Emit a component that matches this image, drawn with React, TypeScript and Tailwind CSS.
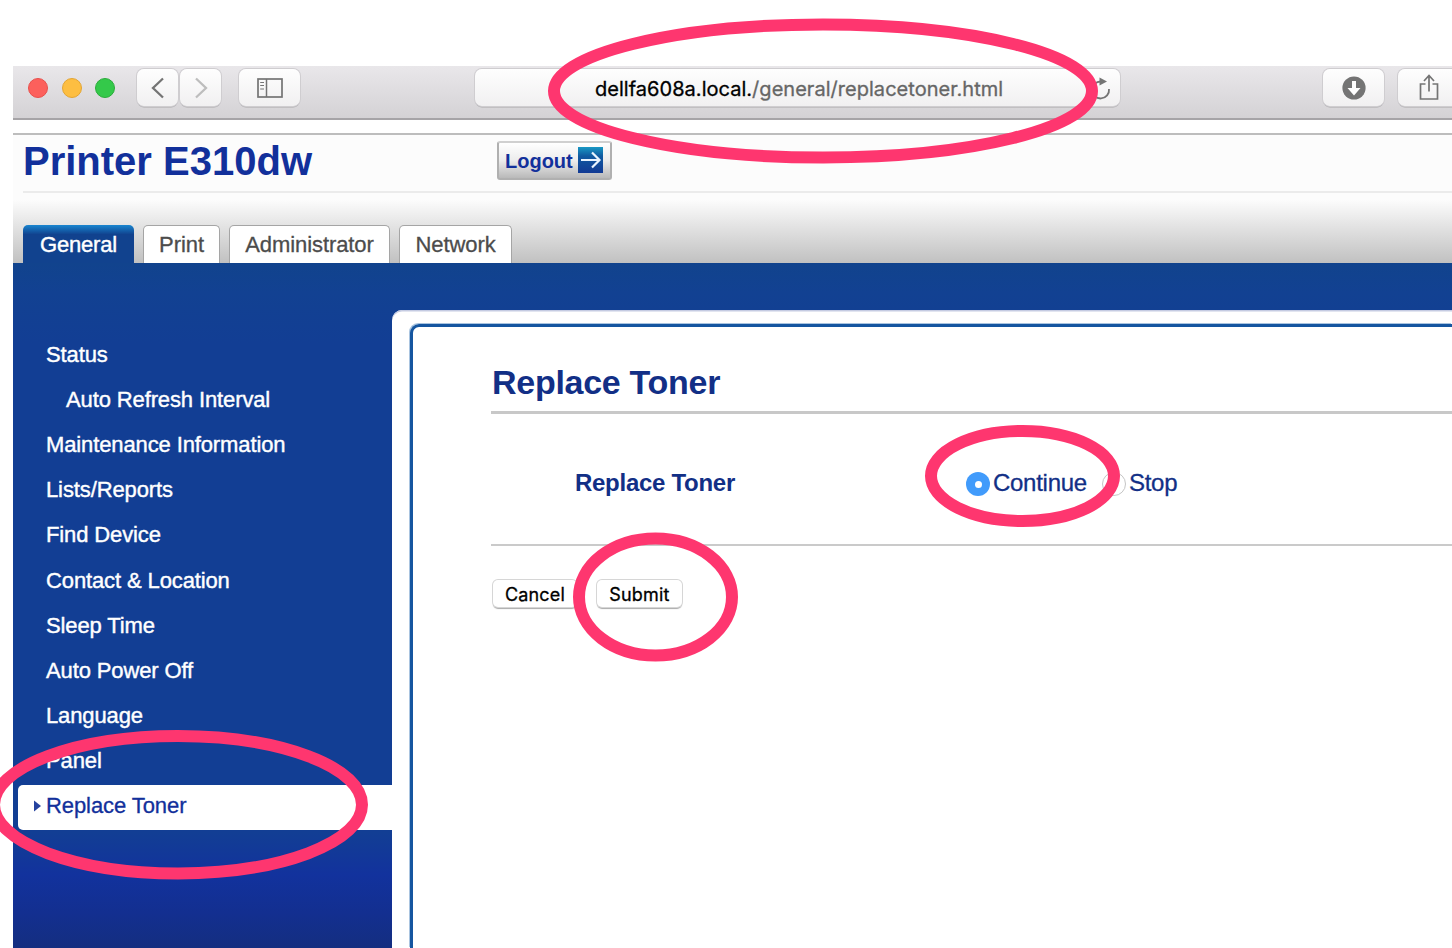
import type { ReactNode } from "react";

const menu = [
  { label: "Status" },
  { label: "Auto Refresh Interval", sub: true },
  { label: "Maintenance Information" },
  { label: "Lists/Reports" },
  { label: "Find Device" },
  { label: "Contact & Location" },
  { label: "Sleep Time" },
  { label: "Auto Power Off" },
  { label: "Language" },
  { label: "Panel" },
];

function ChromeButton({ className, children }: { className: string; children: ReactNode }) {
  return (
    <button
      className={`flex h-[37px] shrink-0 items-center justify-center rounded-[7px] bg-linear-to-b from-[#fefefe] to-[#f1f0f1] shadow-[0_0_0_1px_#cfcdd0,0_1.5px_0_0_#a9a7aa] ${className}`}
    >
      {children}
    </button>
  );
}

function Toolbar() {
  return (
    <div className="flex h-[54px] shrink-0 border-b-2 border-[#a6a4a7] bg-linear-to-b from-[#e9e7ea] to-[#d4d2d5] pt-[3px]">
      <div className="mt-[9px] ml-[15px] flex h-5 gap-[13.5px]">
        <span className="size-5 rounded-full border border-[#e8504c] bg-[#fc605c]" />
        <span className="size-5 rounded-full border border-[#e3a533] bg-[#fdbe41]" />
        <span className="size-5 rounded-full border border-[#2aac3a] bg-[#34c94a]" />
      </div>
      <ChromeButton className="ml-[22px] w-[41px]">
        <svg width="14" height="22" viewBox="0 0 14 22" fill="none" stroke="#747474" strokeWidth="2.3">
          <path d="M12 1.5 2 11 12 20.5" />
        </svg>
      </ChromeButton>
      <ChromeButton className="ml-[2px] w-[41px]">
        <svg width="14" height="22" viewBox="0 0 14 22" fill="none" stroke="#bdbdbd" strokeWidth="2.3">
          <path d="M2 1.5 12 11 2 20.5" />
        </svg>
      </ChromeButton>
      <ChromeButton className="ml-[18px] w-[61px]">
        <svg width="26" height="20" viewBox="0 0 26 20" fill="none" stroke="#747474">
          <rect x="1" y="1" width="24" height="18" strokeWidth="1.7" />
          <path d="M9.5 1v18" strokeWidth="1.5" />
          <path d="M3.2 4.5h3.8M3.2 7.5h3.8M3.2 11h3.8" strokeWidth="1.2" />
        </svg>
      </ChromeButton>
      <div className="ml-[175px] flex h-[37px] w-[645px] shrink-0 items-center rounded-[7px] bg-linear-to-b from-[#fefefe] to-[#f1f0f1] pl-[120px] shadow-[0_0_0_1px_#cfcdd0,0_1.5px_0_0_#a9a7aa]">
        <span className="w-[420px] pt-[2px] font-[Inter,sans-serif] text-[20px] tracking-[0.030px] whitespace-nowrap text-[#666] [-webkit-text-stroke:0.300px_#666]">
          <span className="text-black [-webkit-text-stroke:0.300px_black]">dellfa608a.local.</span>/general/replacetoner.html
        </span>
        <svg className="ml-[70px]" width="26" height="28" viewBox="0 0 26 28" fill="none" stroke="#747474" strokeWidth="1.8">
          <path d="M16 7.500A8.500 8.500 0 1 0 24 15" />
          <path d="M14.500 3.500 22 7.500l-7.500 4z" fill="#747474" stroke="none" />
        </svg>
      </div>
      <ChromeButton className="ml-[203px] w-[61px]">
        <svg width="24" height="24" viewBox="0 0 24 24">
          <circle cx="12" cy="12" r="11.600" fill="#747474" />
          <path d="M10 5h4v7h4.500L12 19.500 5.500 12H10z" fill="#fff" />
        </svg>
      </ChromeButton>
      <ChromeButton className="ml-[14px] w-[61px]">
        <svg className="mb-[2px]" width="20" height="26" viewBox="0 0 20 26" fill="none" stroke="#747474" strokeWidth="1.7">
          <path d="M6.500 10H1.500v15h17V10H13.500" />
          <path d="M10 17.500V1.500M5 7l5-5.500L15 7" />
        </svg>
      </ChromeButton>
    </div>
  );
}

function Tab({ className, children }: { className: string; children: ReactNode }) {
  return (
    <button
      className={`h-[38px] shrink-0 rounded-t-[5px] border-[1.500px] border-b-0 border-[#a5a5a5] bg-white pb-px text-[22px] tracking-[-0.080px] text-[#4c4c4c] [-webkit-text-stroke:0.300px_#4c4c4c] ${className}`}
    >
      {children}
    </button>
  );
}

function Header() {
  return (
    <header className="flex h-[130px] shrink-0 flex-col border-t-2 border-[#bdbdbd] bg-[#fcfcfc]">
      <div className="ml-[10px] flex h-[58px] shrink-0 border-b-2 border-[#ebebeb]">
        <h1 className="mt-[3px] w-[474px] text-[40px] leading-[46px] font-bold whitespace-nowrap text-[#12309b]">
          Printer E310dw
        </h1>
        <button className="mt-[6px] flex h-[39px] w-[115px] items-center rounded-[3px] border-2 border-[#b0b0b0] border-t-[#d0d0d0] bg-linear-to-b from-white via-[#ececec] to-[#b9b9b9] pl-[6px] text-[20px] font-bold text-[#12309b]">
          <span className="w-[73px] text-left">Logout</span>
          <svg className="mb-[2px]" width="25" height="26" viewBox="0 0 25 26">
            <defs>
              <linearGradient id="logout" x2="0" y2="1">
                <stop stopColor="#1998c4" />
                <stop offset=".35" stopColor="#0f5aa0" />
                <stop offset="1" stopColor="#123a94" />
              </linearGradient>
            </defs>
            <rect width="25" height="26" fill="url(#logout)" />
            <path d="M3 13h18M14 5.500 21.500 13 14 20.500" fill="none" stroke="#e8f4ff" strokeWidth="2.200" />
          </svg>
        </button>
      </div>
      <nav className="flex flex-1 items-end bg-linear-to-b from-[#fcfcfc] from-10% to-[#c1c1c1] pl-[10px]">
        <button className="h-[38px] w-[111px] shrink-0 rounded-t-[5px] bg-linear-to-b from-[#1a86d0] to-[#11428e] to-25% text-[22px] tracking-[-0.200px] text-white [-webkit-text-stroke:0.400px_white]">
          General
        </button>
        <Tab className="ml-[9px] w-[77px]">Print</Tab>
        <Tab className="ml-[9px] w-[161px]">Administrator</Tab>
        <Tab className="ml-[9px] w-[113px]">Network</Tab>
      </nav>
    </header>
  );
}

function Sidebar() {
  return (
    <aside className="flex w-[379px] shrink-0 flex-col pt-[70px]">
      {menu.map((item) => (
        <a
          key={item.label}
          className={`flex h-[45.200px] shrink-0 items-center pb-[3px] text-[22px] tracking-[-0.120px] text-white [-webkit-text-stroke:0.400px_white] ${item.sub ? "pl-[53px]" : "pl-[33px]"}`}
        >
          {item.label}
        </a>
      ))}
      <a className="ml-[5px] flex h-[45px] shrink-0 items-center rounded-l-[5px] bg-white pb-[3px] pl-[15px] text-[22px] tracking-[-0.080px] text-[#12309b] [-webkit-text-stroke:0.300px_#12309b]">
        <svg className="mr-[5px]" width="8" height="12" viewBox="0 0 8 12">
          <path d="M1 .5 8 6l-7 5.500z" fill="#26439f" />
        </svg>
        Replace Toner
      </a>
    </aside>
  );
}

function FormButton({ className, children }: { className: string; children: ReactNode }) {
  return (
    <button
      className={`h-[27px] rounded-[5px] bg-white font-[Inter,sans-serif] text-[18px] leading-[27px] tracking-[0.200px] text-black shadow-[0_0_0_1px_#d6d6d6,0_1.500px_1px_0_#aaa] [-webkit-text-stroke:0.300px_black] ${className}`}
    >
      <span className="block pt-px">{children}</span>
    </button>
  );
}

function Content() {
  return (
    <main className="mt-[47px] flex flex-1 rounded-tl-[10px] bg-white pt-[14px] pl-[18px] shadow-[inset_0_1.500px_0_#c5cbe2]">
      <div className="flex-1 rounded-tl-[9px] border-t-[3px] border-l-[3px] border-[#1556a0] pl-[78px] text-[#122f86] shadow-[-1px_-1px_0_#a9c4e0]">
        <h2 className="h-[87px] border-b-[3px] border-[#c8c8c8] pt-[35px] pl-px text-[34px] leading-[40px] font-bold tracking-[-0.280px]">
          Replace Toner
        </h2>
        <div className="flex h-[132px] items-start border-b-2 border-[#cacaca] pt-[55px] pl-[84px] text-[24px] leading-[28px] tracking-[-0.280px]">
          <span className="w-[391px] font-bold">Replace Toner</span>
          <label className="flex w-[136px] items-center [-webkit-text-stroke:0.300px_#122f86]">
            <span className="mt-[2px] mr-[3px] flex size-6 items-center justify-center rounded-full bg-[#419bfb]">
              <span className="size-[7px] rounded-full bg-white" />
            </span>
            Continue
          </label>
          <label className="flex items-center [-webkit-text-stroke:0.300px_#122f86]">
            <span className="mt-[2px] mr-[3px] size-6 rounded-full border-[1.500px] border-[#c5c5c5] bg-white" />
            Stop
          </label>
        </div>
        <div className="flex gap-[20px] pt-[34px] pl-[2px]">
          <FormButton className="w-[84px]">Cancel</FormButton>
          <FormButton className="w-[85px]">Submit</FormButton>
        </div>
      </div>
    </main>
  );
}

export default function App() {
  return (
    <div className="relative flex h-[948px] w-[1452px] flex-col overflow-hidden bg-white pt-[66px] pl-[13px] font-['Liberation_Sans',Arial,sans-serif]">
      <Toolbar />
      <div className="h-[13px] shrink-0" />
      <Header />
      <div className="flex flex-1 bg-[linear-gradient(to_bottom,#11438d_0,#124192_30px,#123e94_80px,#123e94_570px,#12329d_612px,#132f90_650px,#142e80_685px)]">
        <Sidebar />
        <Content />
      </div>
      <svg
        className="pointer-events-none absolute inset-0"
        width="1452"
        height="948"
        viewBox="0 0 1452 948"
        fill="none"
        stroke="#fe366f"
        strokeWidth="12"
      >
        <ellipse cx="823" cy="91" rx="269" ry="66.500" />
        <ellipse cx="1022.500" cy="476" rx="91.500" ry="45" />
        <ellipse cx="655.500" cy="597" rx="76.500" ry="58.500" />
        <ellipse cx="178" cy="804.700" rx="184" ry="68.700" />
      </svg>
    </div>
  );
}
